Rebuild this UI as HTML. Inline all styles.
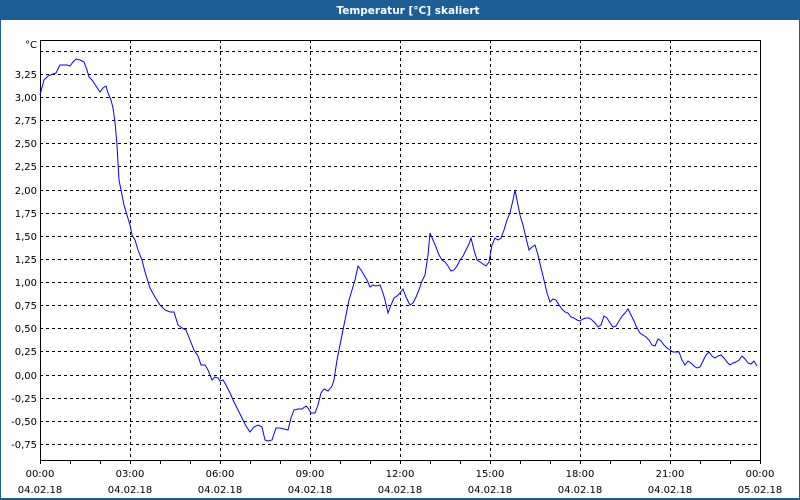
<!DOCTYPE html>
<html><head><meta charset="utf-8"><style>
html,body{margin:0;padding:0;width:800px;height:500px;overflow:hidden;background:#fff}
svg text{font-family:"DejaVu Sans","Liberation Sans",sans-serif;font-size:10px;fill:#000}
</style></head><body>
<svg width="800" height="500" xmlns="http://www.w3.org/2000/svg">
<rect x="0" y="0" width="800" height="500" fill="#1d5e97"/>
<rect x="1" y="20" width="798" height="478" fill="#fff"/>
<text x="408" y="14" text-anchor="middle" style="font-weight:bold;fill:#fff;font-size:10.5px">Temperatur [°C] skaliert</text>
<g stroke="#000" stroke-width="1" stroke-dasharray="3,3" shape-rendering="crispEdges">
<line x1="40" x2="760" y1="51.5" y2="51.5"/><line x1="40" x2="760" y1="74.5" y2="74.5"/>
<line x1="40" x2="760" y1="97.5" y2="97.5"/><line x1="40" x2="760" y1="120.5" y2="120.5"/>
<line x1="40" x2="760" y1="143.5" y2="143.5"/><line x1="40" x2="760" y1="166.5" y2="166.5"/>
<line x1="40" x2="760" y1="190.5" y2="190.5"/><line x1="40" x2="760" y1="213.5" y2="213.5"/>
<line x1="40" x2="760" y1="236.5" y2="236.5"/><line x1="40" x2="760" y1="259.5" y2="259.5"/>
<line x1="40" x2="760" y1="282.5" y2="282.5"/><line x1="40" x2="760" y1="305.5" y2="305.5"/>
<line x1="40" x2="760" y1="328.5" y2="328.5"/><line x1="40" x2="760" y1="351.5" y2="351.5"/>
<line x1="40" x2="760" y1="375.5" y2="375.5"/><line x1="40" x2="760" y1="398.5" y2="398.5"/>
<line x1="40" x2="760" y1="421.5" y2="421.5"/><line x1="40" x2="760" y1="444.5" y2="444.5"/>
<line y1="40" y2="460" x1="130.5" x2="130.5"/><line y1="40" y2="460" x1="220.5" x2="220.5"/>
<line y1="40" y2="460" x1="310.5" x2="310.5"/><line y1="40" y2="460" x1="400.5" x2="400.5"/>
<line y1="40" y2="460" x1="490.5" x2="490.5"/><line y1="40" y2="460" x1="580.5" x2="580.5"/>
<line y1="40" y2="460" x1="670.5" x2="670.5"/>
</g>
<g stroke="#000" stroke-width="1" shape-rendering="crispEdges" fill="none">
<rect x="40.5" y="40.5" width="720" height="420"/>
<path d="M40.5 460v4M70.5 460v4M100.5 460v4M130.5 460v4M160.5 460v4M190.5 460v4M220.5 460v4M250.5 460v4M280.5 460v4M310.5 460v4M340.5 460v4M370.5 460v4M400.5 460v4M430.5 460v4M460.5 460v4M490.5 460v4M520.5 460v4M550.5 460v4M580.5 460v4M610.5 460v4M640.5 460v4M670.5 460v4M700.5 460v4M730.5 460v4M760.5 460v4"/>
</g>
<polyline fill="none" stroke="#0000ff" stroke-width="1" points="40,95 44,80 48,76 53,74 56,73 60,65 63,65 67,65 70,66 73,62 76,59 80,60 84,62 87,70 89,77 92,80 96,86 100,92 103,88 106,86 108,93 111,100 113,108 115,122 117,145 119,180 121,190 124,205 127,215 130,225 132,235 135,240 138,250 142,260 145,272 150,288 155,297 160,305 165,310 170,312 174,312 178,325 182,328 186,330 190,340 194,350 198,356 201,365 205,365 208,370 212,380 215,377 218,378 220,381 223,380 226,385 230,393 234,402 238,410 242,418 246,426 250,432 254,427 258,425 262,427 265,440 268,441 272,440 276,428 280,428 284,429 288,430 291,418 294,410 298,409 302,409 306,406 308,408 311,413 315,413 318,405 321,393 324,389 328,391 332,386 334,380 337,360 340,345 343,330 346,315 349,300 352,290 355,280 358,266 361,270 364,275 367,280 370,287 373,285 376,286 380,285 383,293 385,300 388,313 391,305 394,298 397,296 400,293 403,289 406,297 410,305 413,303 416,297 419,290 422,281 425,275 428,255 430,233 433,240 436,247 439,255 442,260 445,262 448,266 451,271 454,270 457,266 460,260 463,256 466,250 469,244 471,238 474,250 477,260 480,262 483,264 486,266 489,262 492,245 495,238 498,240 501,238 504,230 507,220 510,213 513,200 515,190 517,200 520,215 523,225 526,238 529,250 532,247 535,245 538,255 541,268 544,280 547,293 550,302 553,299 556,300 559,305 562,309 565,312 568,313 571,317 574,318 577,320 580,321 583,319 586,318 589,318 592,320 595,323 598,327 601,325 604,316 607,318 610,323 613,327 616,326 619,321 622,316 625,313 628,309 631,315 634,321 637,328 640,333 643,335 646,337 649,340 652,345 655,346 658,339 661,341 664,345 667,348 670,350 673,352 676,352 679,352 682,360 685,365 688,361 691,363 694,366 697,368 700,367 703,361 706,355 709,352 712,356 715,358 718,356 721,355 724,358 727,362 730,365 733,363 736,362 739,360 742,356 745,359 748,363 751,364 754,361 757,366"/>
<g text-anchor="end">
<text x="37" y="48">°C</text>
<text x="37" y="78">3,25</text><text x="37" y="101">3,00</text><text x="37" y="124">2,75</text>
<text x="37" y="147">2,50</text><text x="37" y="170">2,25</text><text x="37" y="194">2,00</text>
<text x="37" y="217">1,75</text><text x="37" y="240">1,50</text><text x="37" y="263">1,25</text>
<text x="37" y="286">1,00</text><text x="37" y="309">0,75</text><text x="37" y="332">0,50</text>
<text x="37" y="355">0,25</text><text x="37" y="379">0,00</text><text x="37" y="402">-0,25</text>
<text x="37" y="425">-0,50</text><text x="37" y="448">-0,75</text>
</g>
<g text-anchor="middle">
<text x="40" y="477">00:00</text><text x="40" y="493">04.02.18</text>
<text x="130" y="477">03:00</text><text x="130" y="493">04.02.18</text>
<text x="220" y="477">06:00</text><text x="220" y="493">04.02.18</text>
<text x="310" y="477">09:00</text><text x="310" y="493">04.02.18</text>
<text x="400" y="477">12:00</text><text x="400" y="493">04.02.18</text>
<text x="490" y="477">15:00</text><text x="490" y="493">04.02.18</text>
<text x="580" y="477">18:00</text><text x="580" y="493">04.02.18</text>
<text x="670" y="477">21:00</text><text x="670" y="493">04.02.18</text>
<text x="760" y="477">00:00</text><text x="760" y="493">05.02.18</text>
</g>
</svg>
</body></html>
